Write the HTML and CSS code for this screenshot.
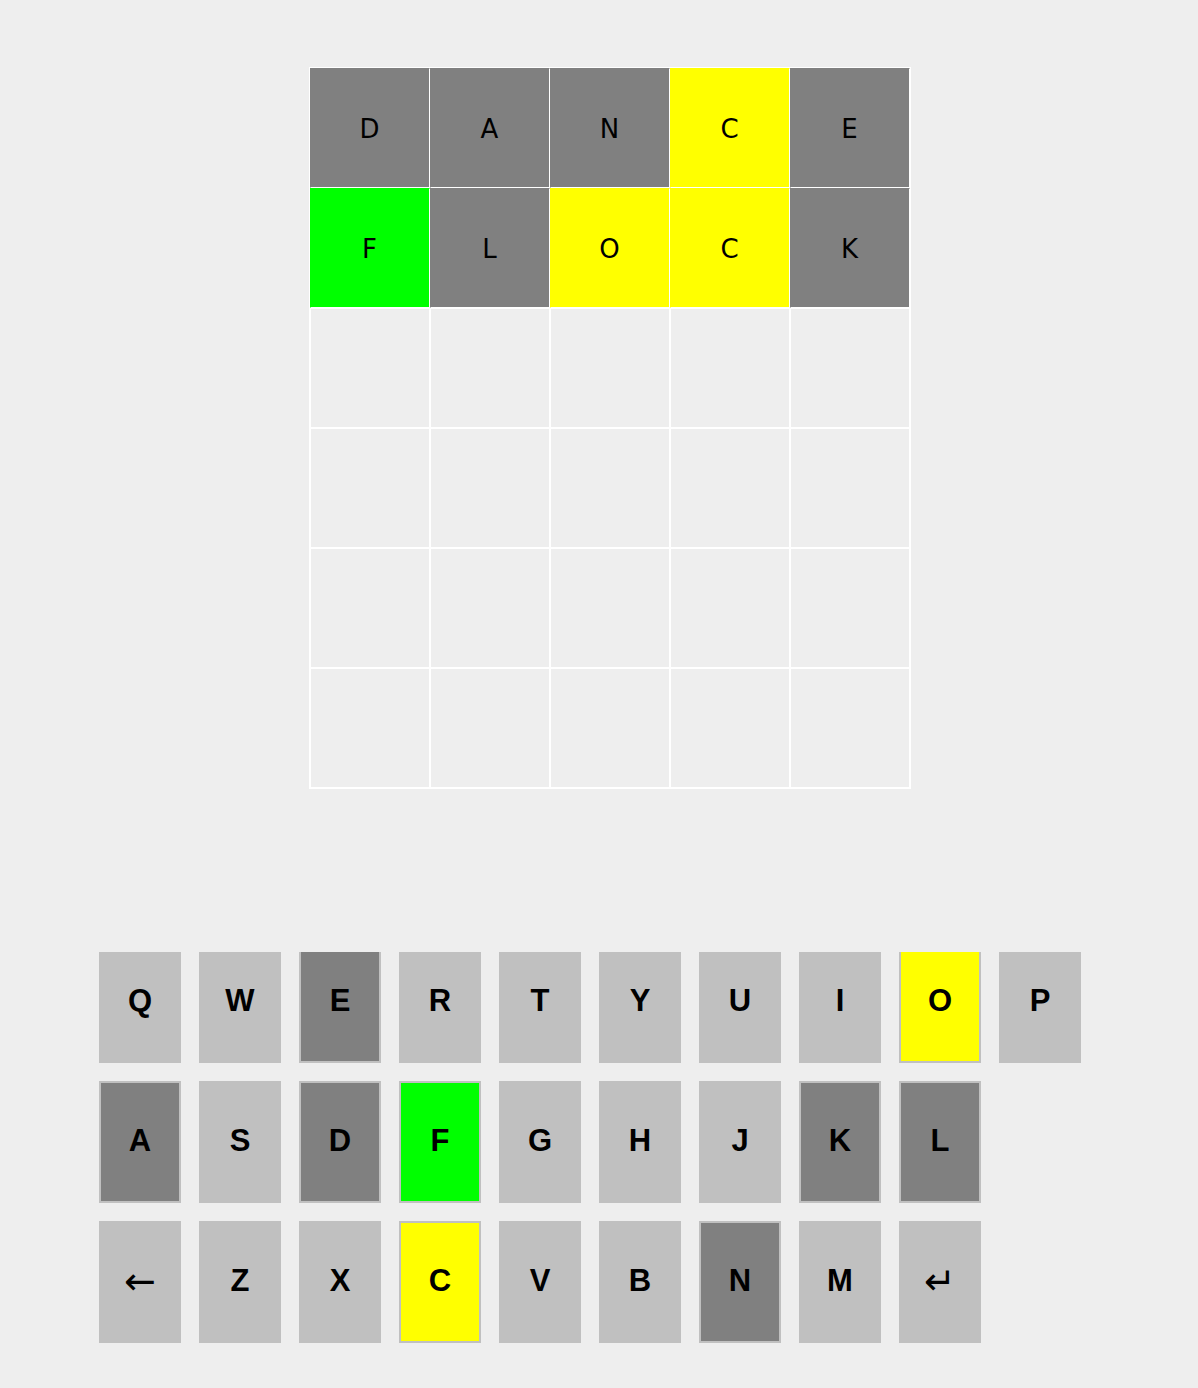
FILE: index.html
```html
<!DOCTYPE html>
<html lang="en">
<head>
  <meta charset="UTF-8">
  <title>Wordle</title>
<link rel="stylesheet" href="styles.css">
</head>
<body>

  <div id="board">
    <div class="tile absent">D</div>
    <div class="tile absent">A</div>
    <div class="tile absent">N</div>
    <div class="tile present">C</div>
    <div class="tile absent">E</div>

    <div class="tile correct">F</div>
    <div class="tile absent">L</div>
    <div class="tile present">O</div>
    <div class="tile present">C</div>
    <div class="tile absent">K</div>

    <div class="tile"></div><div class="tile"></div><div class="tile"></div><div class="tile"></div><div class="tile"></div>
    <div class="tile"></div><div class="tile"></div><div class="tile"></div><div class="tile"></div><div class="tile"></div>
    <div class="tile"></div><div class="tile"></div><div class="tile"></div><div class="tile"></div><div class="tile"></div>
    <div class="tile"></div><div class="tile"></div><div class="tile"></div><div class="tile"></div><div class="tile"></div>
  </div>

  <div id="keyboard">
    <div class="row first">
      <button class="key">Q</button>
      <button class="key">W</button>
      <button class="key absent">E</button>
      <button class="key">R</button>
      <button class="key">T</button>
      <button class="key">Y</button>
      <button class="key">U</button>
      <button class="key">I</button>
      <button class="key present">O</button>
      <button class="key">P</button>
    </div>
    <div class="row">
      <button class="key absent">A</button>
      <button class="key">S</button>
      <button class="key absent">D</button>
      <button class="key correct">F</button>
      <button class="key">G</button>
      <button class="key">H</button>
      <button class="key">J</button>
      <button class="key absent">K</button>
      <button class="key absent">L</button>
    </div>
    <div class="row">
      <button class="key arrow">&larr;</button>
      <button class="key">Z</button>
      <button class="key">X</button>
      <button class="key present">C</button>
      <button class="key">V</button>
      <button class="key">B</button>
      <button class="key absent">N</button>
      <button class="key">M</button>
      <button class="key enter">&#8629;</button>
    </div>
  </div>

</body>
</html>
```

FILE: styles.css
```css
body {
  margin: 0;
  padding: 67px 0 0 0;
  background: #eeeeee;
  font-family: 'DejaVu Sans', sans-serif;
}

#board {
  margin-left: 309px;
  width: 600px;
  display: grid;
  grid-template-columns: repeat(5, 120px);
  grid-auto-rows: 120px;
  border: 1px solid #ffffff;
}

.tile {
  box-sizing: border-box;
  border: 1px solid #ffffff;
  padding: 2px 1px 0 0;
  display: flex;
  justify-content: center;
  align-items: center;
  font-size: 26px;
  color: #000;
}

.tile.absent {
  background: #808080;
  border-left-color: #808080;
  border-top-color: #808080;
}

.tile.present {
  background: #ffff00;
  border-left-color: #ffff00;
  border-top-color: #ffff00;
}

.tile.correct {
  background: #00ff00;
  border-left-color: #00ff00;
  border-top-color: #00ff00;
}

#keyboard {
  margin: 163px 0 0 99px;
  display: flex;
  flex-direction: column;
  gap: 18px;
}

.row {
  display: flex;
  gap: 18px;
}

/* top row is cut off a bit at the top */
.row.first {
  height: 111px;
  overflow: hidden;
}

.row.first .key {
  margin-top: -11px;
}

.key {
  box-sizing: border-box;
  width: 82px;
  height: 122px;
  padding: 0 0 3px 0;
  border: 2px solid #c0c0c0;
  background: #c0c0c0;
  color: #000;
  font-family: 'Liberation Sans', Arial, sans-serif;
  font-weight: bold;
  font-size: 31px;
  display: flex;
  justify-content: center;
  align-items: center;
  cursor: pointer;
}

.key.absent {
  background: #808080;
}

.key.present {
  background: #ffff00;
}

.key.correct {
  background: #00ff00;
}

.key.arrow {
  font-family: 'DejaVu Sans', sans-serif;
  font-weight: normal;
  font-size: 38px;
}

.key.enter {
  font-family: 'DejaVu Sans', sans-serif;
  font-weight: normal;
  font-size: 38px;
}
```
